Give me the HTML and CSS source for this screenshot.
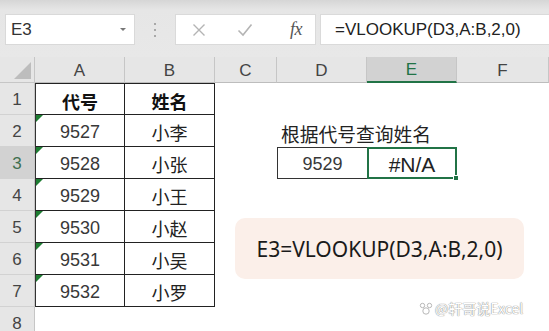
FILE: index.html
```html
<!DOCTYPE html>
<html lang="zh-CN">
<head>
<meta charset="utf-8">
<link rel="stylesheet" href="styles.css">
</head>
<body>
<div class="app">
  <div class="toolbar">
    <div class="namebox"><span>E3</span><span class="caret"></span></div>
    <div class="dots"><i></i><i></i><i></i></div>
    <div class="btns">
      <svg class="ico" width="14" height="14" viewBox="0 0 14 14"><path d="M1.5 1.5 L12.5 12.5 M12.5 1.5 L1.5 12.5" stroke="#b4b4b4" stroke-width="1.4" fill="none"/></svg>
      <svg class="ico" width="16" height="14" viewBox="0 0 16 14"><path d="M1.5 7.5 L6 12 L14.5 1.5" stroke="#b4b4b4" stroke-width="1.6" fill="none"/></svg>
      <span class="fx">fx</span>
    </div>
    <div class="formula">=VLOOKUP(D3,A:B,2,0)</div>
  </div>

  <div class="sheet">
    <div class="corner"><span class="tri"></span></div>
    <div class="ch">A</div><div class="ch">B</div><div class="ch">C</div><div class="ch">D</div><div class="ch sel">E</div><div class="ch">F</div>

    <div class="rh">1</div>
    <div class="c t tl top b">代号</div><div class="c t tr top b">姓名</div><div class="c"></div><div class="c"></div><div class="c"></div><div class="c"></div>

    <div class="rh">2</div>
    <div class="c t tl"><span class="flag"></span>9527</div><div class="c t tr">小李</div><div class="c"></div><div class="c left"><span class="label">根据代号查询姓名</span></div><div class="c"></div><div class="c"></div>

    <div class="rh sel">3</div>
    <div class="c t tl"><span class="flag"></span>9528</div><div class="c t tr">小张</div><div class="c"></div><div class="c box">9529</div><div class="c active">#N/A<span class="handle"></span></div><div class="c"></div>

    <div class="rh">4</div>
    <div class="c t tl"><span class="flag"></span>9529</div><div class="c t tr">小王</div><div class="c"></div><div class="c"></div><div class="c"></div><div class="c"></div>

    <div class="rh">5</div>
    <div class="c t tl"><span class="flag"></span>9530</div><div class="c t tr">小赵</div><div class="c"></div><div class="c"></div><div class="c"></div><div class="c"></div>

    <div class="rh">6</div>
    <div class="c t tl"><span class="flag"></span>9531</div><div class="c t tr">小吴</div><div class="c"></div><div class="c"></div><div class="c"></div><div class="c"></div>

    <div class="rh">7</div>
    <div class="c t tl"><span class="flag"></span>9532</div><div class="c t tr">小罗</div><div class="c"></div><div class="c"></div><div class="c"></div><div class="c"></div>

    <div class="rh">8</div>
    <div class="c"></div><div class="c"></div><div class="c"></div><div class="c"></div><div class="c"></div><div class="c"></div>
  </div>

  <div class="note">E3=VLOOKUP(D3,A:B,2,0)</div>

  <div class="wm">
    <svg width="14" height="14" viewBox="0 0 14 14"><g fill="#fff" stroke="#b0b0b0" stroke-width="0.9"><circle cx="3.5" cy="4.5" r="2.2"/><circle cx="10.5" cy="4.5" r="2.2"/><circle cx="7" cy="10" r="3.2"/></g></svg>
    <span>@轩哥说Excel</span>
  </div>
</div>
</body>
</html>
```

FILE: styles.css
```css
* { box-sizing: border-box; }
html, body { margin: 0; padding: 0; }
body {
  width: 549px;
  height: 331px;
  overflow: hidden;
  background: #ffffff;
  font-family: "Liberation Sans", "Noto Sans CJK SC", sans-serif;
  color: #333;
}
.app {
  position: relative;
  width: 549px;
  height: 331px;
  overflow: hidden;
}

/* toolbar */
.toolbar {
  height: 57px;
  display: flex;
  align-items: flex-start;
  padding-top: 14px;
  padding-left: 5px;
  background: linear-gradient(#d6d6d6 0px, #e6e6e6 10px, #e8e8e8 100%);
}
.namebox {
  width: 130px;
  height: 31px;
  background: #fff;
  border: 1px solid #d9d9d9;
  display: flex;
  align-items: center;
  justify-content: space-between;
  padding: 0 8px 0 5px;
  font-size: 17px;
  color: #333;
}
.caret {
  width: 0; height: 0;
  border-left: 3px solid transparent;
  border-right: 3px solid transparent;
  border-top: 3px solid #777;
}
.dots {
  width: 40px;
  height: 31px;
  display: flex;
  flex-direction: column;
  align-items: center;
  justify-content: center;
  gap: 4px;
}
.dots i {
  display: block;
  width: 2px;
  height: 2px;
  background: #a8a8a8;
}
.btns {
  width: 141px;
  height: 31px;
  background: #fff;
  border: 1px solid #dadada;
  display: flex;
  align-items: center;
  padding-left: 16px;
}
.btns .ico { display: block; }
.btns .ico:nth-child(1) { margin-right: 31px; }
.btns .ico:nth-child(2) { margin-right: 37px; }
.fx {
  font-family: "Liberation Serif", "DejaVu Serif", serif;
  font-style: italic;
  font-size: 18px;
  color: #555;
  letter-spacing: -0.5px;
}
.formula {
  margin-left: 4px;
  flex: 1;
  height: 31px;
  background: #fff;
  border: 1px solid #dadada;
  border-right: none;
  display: flex;
  align-items: center;
  padding-left: 14px;
  font-size: 17px;
  color: #222;
}

/* sheet */
.sheet {
  display: grid;
  grid-template-columns: 35px 90px 90px 62px 90px 90px 92px;
  grid-template-rows: 26px repeat(8, 32px);
}
.corner {
  background: #e6e6e6;
  border-right: 1px solid #c6c6c6;
  border-bottom: 1px solid #c6c6c6;
  position: relative;
}
.tri {
  position: absolute;
  right: 3px;
  bottom: 3px;
  width: 0; height: 0;
  border-left: 17px solid transparent;
  border-bottom: 17px solid #bdbdbd;
}
.ch {
  background: #e6e6e6;
  border-right: 1px solid #c6c6c6;
  border-bottom: 1px solid #bdbdbd;
  display: flex;
  align-items: center;
  justify-content: center;
  font-size: 17px;
  color: #444;
  padding-top: 2px;
}
.ch.sel {
  background: #d2d2d2;
  color: #217346;
  border-bottom: 2px solid #217346;
}
.rh {
  background: #e6e6e6;
  border-right: 1px solid #c6c6c6;
  border-bottom: 1px solid #d2d2d2;
  display: flex;
  align-items: center;
  justify-content: center;
  font-size: 17px;
  color: #444;
  padding-top: 2px;
}
.rh.sel {
  background: #d2d2d2;
  color: #3f6f50;
}
.c {
  position: relative;
  display: flex;
  align-items: center;
  justify-content: center;
  font-size: 18px;
  color: #383838;
  padding-top: 3px;
  white-space: nowrap;
}
.c.t {
  border-right: 1px solid #222;
  border-bottom: 1px solid #222;
}
.c.tl { border-left: 1px solid #333; }
.c.top { border-top: 1px solid #222; }
.c.tr { color: #222; }
.c.b { font-weight: bold; color: #111; }
.flag {
  position: absolute;
  left: 0;
  top: 0;
  width: 0; height: 0;
  border-top: 7px solid #1e7d32;
  border-right: 7px solid transparent;
}
.c.left {
  justify-content: flex-start;
  align-items: flex-end;
  overflow: visible;
  padding-left: 4px;
  padding-bottom: 3px;
}
.label {
  font-family: "Noto Sans CJK SC", sans-serif;
  font-size: 18.75px;
  color: #222;
  line-height: 1;
}
.c.box {
  border: 1px solid #333;
  border-right: none;
}
.c.active {
  border: 2px solid #217346;
  font-size: 21px;
  color: #222;
}
.handle {
  position: absolute;
  right: -4px;
  bottom: -4px;
  width: 6px;
  height: 6px;
  background: #217346;
  border: 1px solid #fff;
}

/* floating note */
.note {
  position: absolute;
  left: 235px;
  top: 218px;
  width: 289px;
  height: 61px;
  border-radius: 10px;
  background: #fbefe9;
  display: flex;
  align-items: center;
  justify-content: center;
  font-family: "Noto Sans", "Open Sans", sans-serif;
  font-size: 21px;
  color: #1a1a1a;
}

.wm {
  position: absolute;
  left: 419px;
  top: 301px;
  display: flex;
  align-items: center;
  gap: 2px;
  font-family: "Noto Sans CJK SC", sans-serif;
  font-size: 14px;
  color: #fff;
  text-shadow: 0 0 1px #888, 0 0 1px #888;
  line-height: 1;
}
```
